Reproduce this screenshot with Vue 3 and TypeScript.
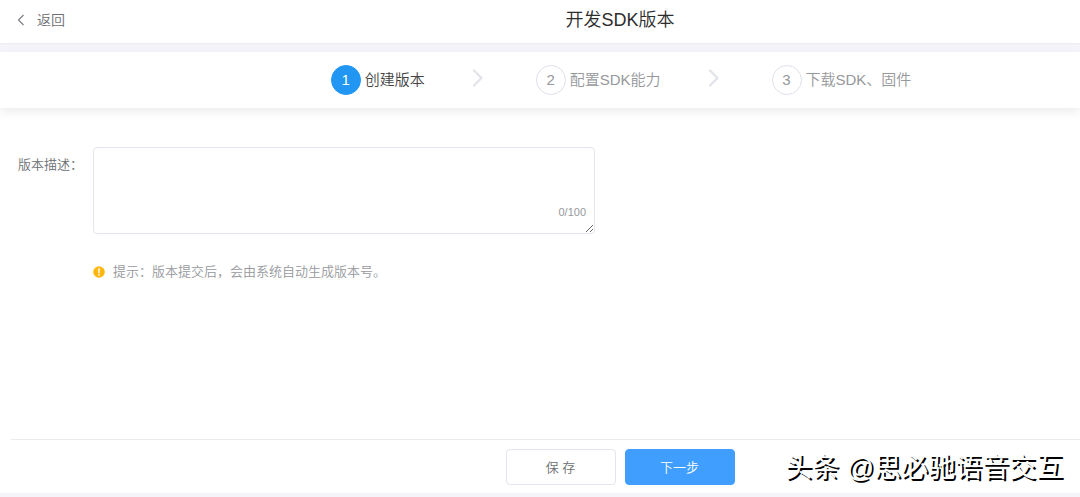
<script setup lang="ts">
import { ref } from 'vue'

interface Step {
  id: number
  label: string
}

const steps: Step[] = [
  { id: 1, label: '创建版本' },
  { id: 2, label: '配置SDK能力' },
  { id: 3, label: '下载SDK、固件' },
]
const current = ref(1)
const description = ref('')
const maxLength = 100
</script>

<template>
  <div class="page">
    <header class="header">
      <a class="back" href="#">
        <svg width="8" height="12" viewBox="0 0 8 12" aria-hidden="true">
          <path d="M6.5 1 1.5 6l5 5" fill="none" stroke="#777a80" stroke-width="1.1" />
        </svg>
        <span>返回</span>
      </a>
      <h1 class="title">开发SDK版本</h1>
    </header>

    <nav class="steps">
      <ol class="step-list">
        <li v-for="step in steps" :key="step.id" class="step" :class="{ active: step.id === current }">
          <span class="number">{{ step.id }}</span>
          <span class="step-label">{{ step.label }}</span>
          <svg v-if="step.id < steps.length" class="arrow" width="12" height="18" viewBox="0 0 12 18" aria-hidden="true">
            <path d="M2 1.5 9.5 9 2 16.5" fill="none" stroke="#e2e4ea" stroke-width="2.4" stroke-linecap="round" stroke-linejoin="round" />
          </svg>
        </li>
      </ol>
    </nav>

    <main class="content">
      <div class="field">
        <label class="field-label" for="description">版本描述：</label>
        <div class="control">
          <textarea id="description" v-model="description" class="textarea" :maxlength="maxLength"></textarea>
          <span class="counter">{{ description.length }}/{{ maxLength }}</span>
        </div>
      </div>
      <p class="hint">
        <svg width="12" height="12" viewBox="0 0 12 12" aria-hidden="true">
          <circle cx="6" cy="6" r="5.8" fill="#ffb70f" />
          <path d="M6 2.8v4" stroke="#fff" stroke-width="1.4" stroke-linecap="round" />
          <circle cx="6" cy="8.9" r=".8" fill="#fff" />
        </svg>
        <span>提示：版本提交后，会由系统自动生成版本号。</span>
      </p>
    </main>

    <footer class="footer">
      <button class="button" type="button">保 存</button>
      <button class="button primary" type="button">下一步</button>
      <span class="watermark">头条 @思必驰语音交互</span>
    </footer>
  </div>
</template>

<style>
body {
  margin: 0;
  background: #f4f4fa;
}
</style>

<style scoped>
.page {
  box-sizing: border-box;
  display: flex;
  flex-direction: column;
  min-height: 100vh;
  padding-bottom: 4px;
  font-family: "Liberation Sans", "Noto Sans CJK SC", sans-serif;
  font-size: 13px;
  font-weight: 350;
  color: #6c6e72;
}
.header {
  display: flex;
  align-items: center;
  height: 42px;
  padding-bottom: 1px;
  background: #fff;
  box-shadow: 0 1px 2px rgba(0, 0, 0, 0.04);
}
.back {
  box-sizing: border-box;
  display: flex;
  align-items: center;
  gap: 12px;
  width: 160px;
  padding-left: 17px;
  padding-bottom: 2px;
  font-size: 14px;
  line-height: 20px;
  color: #6c6e72;
  text-decoration: none;
}
.title {
  flex: 1;
  margin: 0;
  padding-bottom: 2px;
  text-align: center;
  font-size: 18px;
  line-height: 28px;
  font-weight: 350;
  color: #2c2c2c;
}
.steps {
  position: relative;
  margin-top: 9px;
  padding-left: 162px;
  background: #fff;
  box-shadow: 0 4px 10px rgba(0, 0, 0, 0.08);
}
.step-list {
  display: flex;
  justify-content: center;
  align-items: center;
  height: 56px;
  margin: 0;
  padding: 0;
  list-style: none;
}
.step {
  display: flex;
  align-items: center;
  font-size: 15px;
  line-height: 22px;
  color: #96989c;
}
.number {
  box-sizing: border-box;
  width: 30px;
  height: 30px;
  margin-right: 4px;
  border: 1px solid #dfe1ea;
  border-radius: 50%;
  text-align: center;
  line-height: 27px;
}
.active {
  color: #444;
}
.active .number {
  border-color: #2196f3;
  background: #2196f3;
  color: #fff;
}
.arrow {
  margin: 0 52px 4px 47px;
}
.content {
  flex: 1;
  padding: 39px 18px 20px;
  background: #fff;
}
.field {
  display: flex;
}
.field-label {
  width: 75px;
  line-height: 36px;
  white-space: nowrap;
}
.control {
  position: relative;
  flex: 0 1 502px;
}
.textarea {
  box-sizing: border-box;
  display: block;
  width: 100%;
  height: 87px;
  padding: 8px 12px;
  border: 1px solid #e4e5ed;
  border-radius: 4px;
  outline: none;
  background: #fff;
  font: inherit;
  color: inherit;
  resize: vertical;
}
.counter {
  position: absolute;
  right: 9px;
  bottom: 14px;
  font-size: 11px;
  line-height: 16px;
  color: #96989c;
}
.hint {
  display: flex;
  align-items: center;
  gap: 8px;
  margin: 28px 0 0 75px;
  line-height: 20px;
  color: #96989c;
}
.footer {
  position: relative;
  display: flex;
  justify-content: center;
  gap: 9px;
  padding: 10px 0 8px 160px;
  background: #fff;
}
.footer::before {
  content: "";
  position: absolute;
  top: 0;
  left: 11px;
  right: 0;
  height: 1px;
  background: #ebebee;
}
.button {
  box-sizing: border-box;
  width: 110px;
  height: 36px;
  padding: 0 0 2px;
  border: 1px solid #e4e5ed;
  border-radius: 4px;
  background: #fff;
  font: inherit;
  color: #6c6e72;
}
.primary {
  border-color: #409eff;
  background: #409eff;
  color: #fff;
}
.watermark {
  position: absolute;
  right: 17px;
  bottom: 5px;
  font-size: 27px;
  line-height: 40px;
  font-weight: 400;
  color: #fff;
  text-shadow: 2px 2px 0 #000;
  white-space: nowrap;
}
</style>
